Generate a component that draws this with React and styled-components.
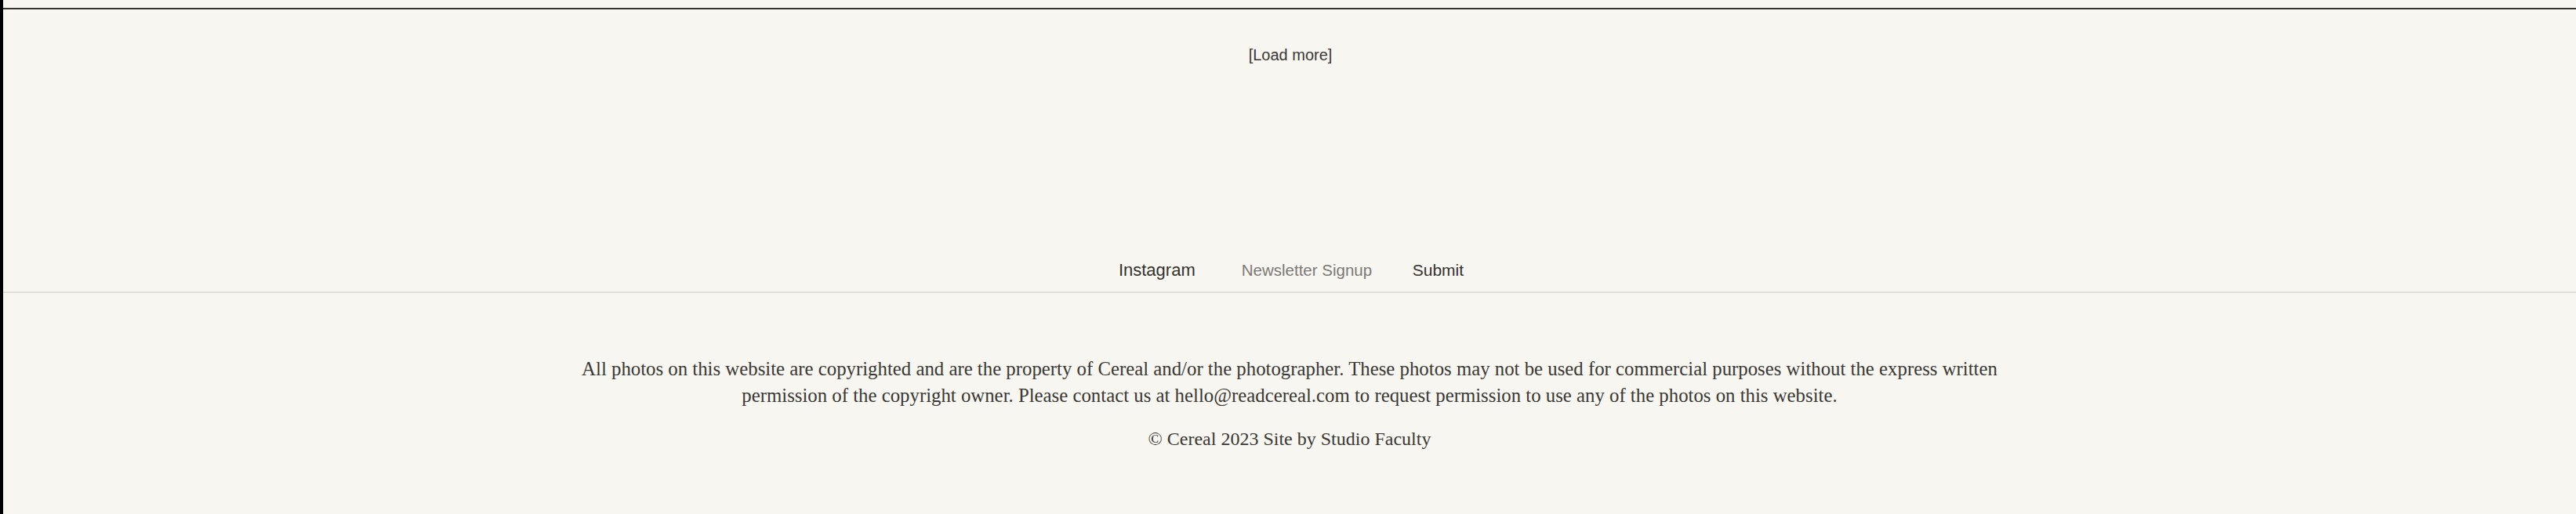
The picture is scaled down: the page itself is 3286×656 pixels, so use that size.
import React from "react";
import styled, { createGlobalStyle } from "styled-components";

const GlobalStyle = createGlobalStyle`
  html, body {
    margin: 0;
    padding: 0;
    background: #f7f6f1;
  }
  * { box-sizing: border-box; }
`;

const Page = styled.div`
  min-height: 656px;
  border-left: 4px solid #000;
  background: #f7f6f1;
  display: flex;
  flex-direction: column;
  color: #33312d;
`;

const TopRule = styled.hr`
  margin: 10px 0 0;
  border: 0;
  height: 2px;
  background: #35332f;
`;

const LoadMoreRow = styled.div`
  display: flex;
  justify-content: center;
  padding-top: 46px;
  padding-left: 2px;
`;

const LoadMoreButton = styled.button`
  border: 0;
  background: none;
  padding: 0;
  font-family: "Liberation Sans", Arial, sans-serif;
  font-size: 20px;
  line-height: 24px;
  color: #3a3834;
  cursor: pointer;
`;

const Footer = styled.footer`
  margin-top: 250px;
  display: flex;
  flex-direction: column;
`;

const NavRow = styled.div`
  display: flex;
  justify-content: center;
  align-items: center;
  height: 26px;
  padding-left: 4px;
`;

const NavLink = styled.a`
  font-family: "Liberation Sans", Arial, sans-serif;
  font-size: 22px;
  line-height: 26px;
  color: #34322e;
  text-decoration: none;
  margin-right: 59px;
`;

const NewsletterForm = styled.form`
  display: flex;
  align-items: center;
  gap: 38px;
`;

const EmailInput = styled.input`
  width: 180px;
  border: 0;
  background: transparent;
  padding: 0;
  font-family: "Liberation Sans", Arial, sans-serif;
  font-size: 20.5px;
  line-height: 26px;
  color: #34322e;
  outline: none;
  &::placeholder {
    color: #7b7975;
  }
`;

const SubmitButton = styled.button`
  border: 0;
  background: none;
  padding: 0;
  font-family: "Liberation Sans", Arial, sans-serif;
  font-size: 21px;
  line-height: 26px;
  color: #34322e;
  cursor: pointer;
`;

const Divider = styled.hr`
  margin: 14px 0 0;
  border: 0;
  height: 2px;
  background: #e0dfda;
`;

const Legal = styled.p`
  margin: 80px auto 0;
  text-align: center;
  font-family: "Liberation Serif", "Times New Roman", serif;
  font-size: 24.8px;
  line-height: 34px;
  color: #3a3834;
  white-space: nowrap;
`;

const Copyright = styled.p`
  margin: 23px 0 0;
  text-align: center;
  font-family: "Liberation Serif", "Times New Roman", serif;
  font-size: 24px;
  line-height: 30px;
  color: #3a3834;
`;

export default function App() {
  return (
    <>
      <GlobalStyle />
      <Page>
        <TopRule />
        <LoadMoreRow>
          <LoadMoreButton type="button">[Load more]</LoadMoreButton>
        </LoadMoreRow>
        <Footer>
          <NavRow>
            <NavLink href="#">Instagram</NavLink>
            <NewsletterForm onSubmit={(e) => e.preventDefault()}>
              <EmailInput type="email" placeholder="Newsletter Signup" />
              <SubmitButton type="submit">Submit</SubmitButton>
            </NewsletterForm>
          </NavRow>
          <Divider />
          <Legal>
            All photos on this website are copyrighted and are the property of Cereal and/or the photographer. These photos may not be used for commercial purposes without the express written
            <br />
            permission of the copyright owner. Please contact us at hello@readcereal.com to request permission to use any of the photos on this website.
          </Legal>
          <Copyright>© Cereal 2023 Site by Studio Faculty</Copyright>
        </Footer>
      </Page>
    </>
  );
}
